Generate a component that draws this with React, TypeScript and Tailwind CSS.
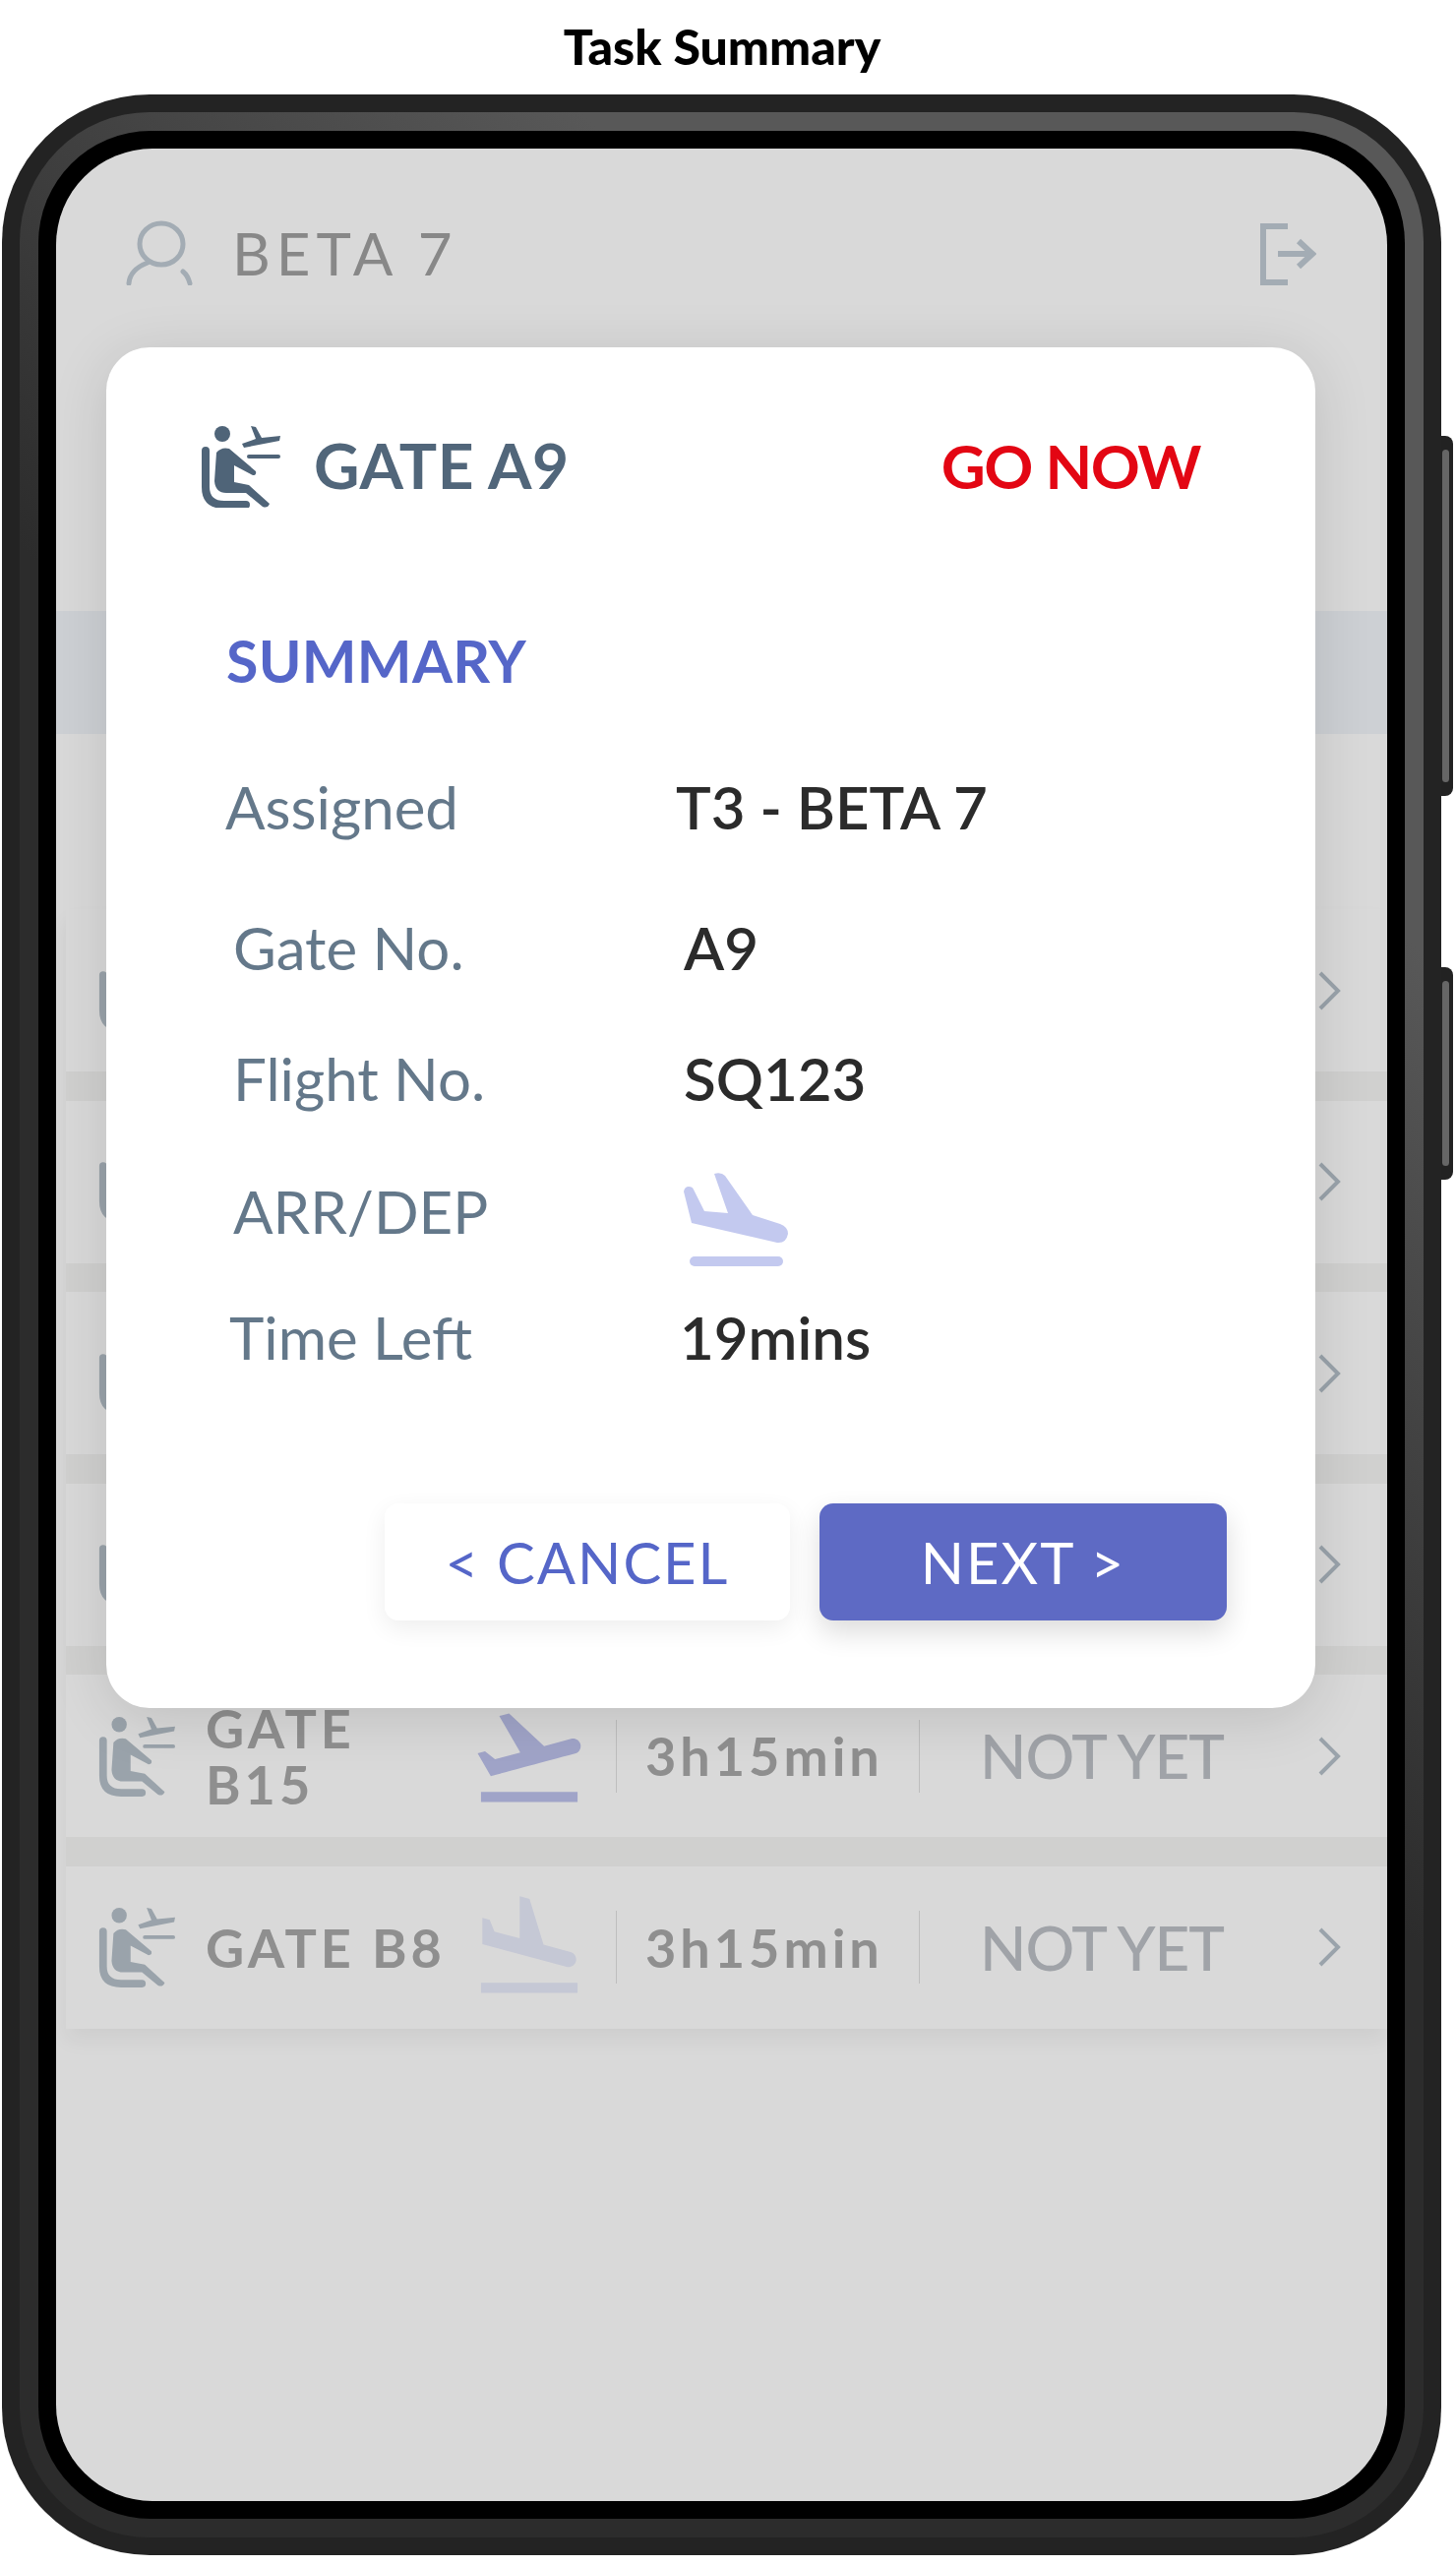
import { MdFlightLand, MdFlightTakeoff } from "react-icons/md";

const SeatIcon = ({ className }: { className: string }) => (
  <svg viewBox="0 0 82 83" className={className} fill="currentColor">
    <circle cx="23" cy="8" r="8" />
    <path d="M6 25V62Q6 80 25 80H47" fill="none" stroke="currentColor" strokeWidth="8" strokeLinecap="round" />
    <path d="M17 27Q22 21 30 23L57 46Q58 50 54 50L35 40V57L50 60L71 79Q69 84 64 82L47 68H27Q16 68 15 56Z" />
    <path d="M52 0L57 1L63 12L82 10L81 15L45 22L43 18L57 13Z" />
    <path d="M50 31H80" fill="none" stroke="currentColor" strokeWidth="4" strokeLinecap="round" />
  </svg>
);

const RoundedLandIcon = ({ className }: { className: string }) => (
  <svg viewBox="0 0 106 95" className={className} fill="currentColor">
    <path d="M31 1Q38-1 42 3L70 43L98 52Q106 55 106 62Q104 72 95 71L8 51L0 19Q1 14 5 14Q9 14 10 17L21 39L45 41Z" />
    <rect x="6" y="85" width="95" height="10" rx="5" />
  </svg>
);

const UserIcon = () => (
  <svg viewBox="0 0 68 66" className="w-[68px] h-[66px] text-[#c0cbd4]" fill="none" stroke="currentColor" strokeWidth="5" strokeLinecap="round">
    <ellipse cx="36" cy="24" rx="22" ry="21" />
    <path d="M3 64Q4 50 22 43" />
    <path d="M58 52Q63 56 65 64" />
  </svg>
);

const LogoutIcon = () => (
  <svg viewBox="0 0 57 63" className="w-[57px] h-[63px] text-[#c0cbd4]" fill="none" stroke="currentColor" strokeWidth="6">
    <path d="M28 3H3V60H28" />
    <path d="M18 31H52M39 18L53 31L39 44" />
  </svg>
);

const ChevronIcon = () => (
  <svg viewBox="0 0 24 40" className="w-[24px] h-[40px] text-[#b5c0c9]" fill="none" stroke="currentColor" strokeWidth="4">
    <path d="M3 2L21 20L3 38" />
  </svg>
);

const gateRows = [
  { id: 1 },
  { id: 2 },
  { id: 3 },
  { id: 4 },
  { id: 5, gate: "GATE B15", kind: "takeoff" },
  { id: 6, gate: "GATE B8", kind: "land" },
];

const summaryRows = [
  { label: "Assigned", value: "T3 - BETA 7", rowClass: "mt-[76px] pl-[121px]" },
  { label: "Gate No.", value: "A9", rowClass: "mt-[71px] pl-[129px]" },
  { label: "Flight No.", value: "SQ123", rowClass: "mt-[61px] pl-[129px]" },
  { label: "ARR/DEP", icon: true, rowClass: "mt-[63px] pl-[129px]" },
  { label: "Time Left", value: "19mins", rowClass: "mt-[56px] pl-[125px]" },
];

const GateRow = ({ gate, kind }: { gate?: string; kind?: string }) => (
  <div className="h-[165px] bg-white flex items-center pl-[32px] pr-[47px]">
    <SeatIcon className="w-[79px] h-[88px] text-[#b5c0c9] shrink-0" />
    <div className="w-[305px] pl-[31px] pr-[26px] shrink-0 text-[54px] leading-[57px] font-bold tracking-[4px] text-[#a8a8a8]">
      {gate}
    </div>
    <div className="w-[110px] h-[100px] shrink-0 flex items-center justify-center">
      {kind === "takeoff" && <MdFlightTakeoff className="text-[124px] shrink-0 text-[#bcc1eb]" />}
      {kind === "land" && <MdFlightLand className="text-[124px] shrink-0 text-[#e8ebfb]" />}
    </div>
    {gate && (
      <>
        <div className="w-px h-[74px] bg-[#e0e0e0] ml-[33px] shrink-0" />
        <div className="w-[307px] pl-[29px] shrink-0 text-[54px] font-bold tracking-[4px] text-[#a8a8a8]">3h15min</div>
        <div className="w-px h-[74px] bg-[#e0e0e0] shrink-0" />
        <div className="pl-[61px] shrink-0 text-[62px] font-medium tracking-[-1px] whitespace-nowrap text-[#bcc0c6]">NOT YET</div>
      </>
    )}
    <div className="ml-auto">
      <ChevronIcon />
    </div>
  </div>
);

const App = () => {
  return (
    <div className="w-[1480px] h-[2608px] bg-white font-[Lato,sans-serif] overflow-hidden">
      <h1 className="h-[96px] pt-[19px] text-center text-[50px] leading-[56px] font-black text-black pr-[12px]">Task Summary</h1>

      <div className="relative ml-[2px] w-[1463px] h-[2501px]">
        {/* side buttons */}
        <div className="absolute left-[1455px] top-[347px] w-[20px] h-[366px] rounded-r-[8px] bg-[#222] flex justify-end py-[14px] pr-[4px]">
          <div className="w-[7px] bg-[#666] rounded-full" />
        </div>
        <div className="absolute left-[1455px] top-[887px] w-[20px] h-[216px] rounded-r-[8px] bg-[#222] flex justify-end py-[14px] pr-[4px]">
          <div className="w-[7px] bg-[#666] rounded-full" />
        </div>

        <div className="relative h-full rounded-[150px] bg-[#232323] p-[18px]">
          <div className="h-full rounded-[132px] bg-[linear-gradient(45deg,#2c2c2c_52%,#585858_78%)] p-[19px]">
            <div className="h-full rounded-[114px] bg-black p-[18px]">
              <div className="relative h-full rounded-[98px] bg-white overflow-hidden">
                <div className="h-[470px]">
                  <div className="flex items-center pt-[72px] pl-[71px] pr-[72px]">
                    <UserIcon />
                    <span className="ml-[40px] text-[60px] leading-[68px] tracking-[6px] text-[#a0a0a0]">BETA 7</span>
                    <div className="ml-auto mt-[2px]">
                      <LogoutIcon />
                    </div>
                  </div>
                </div>
                <div className="h-[125px] bg-slate-100" />
                <div className="h-[178px]" />
                <div className="ml-[10px] bg-[#f5f5f4] flex flex-col gap-[29.5px] shadow-[0_12px_20px_rgba(0,0,0,0.05)]">
                  {gateRows.map((row) => (
                    <GateRow key={row.id} gate={row.gate} kind={row.kind} />
                  ))}
                </div>

                {/* dim layer + dialog */}
                <div className="absolute inset-0 bg-black/15">
                  <div className="absolute left-[51px] top-[202px] w-[1229px] h-[1383px] rounded-[44px] bg-white pt-[75px] shadow-[0_10px_60px_rgba(0,0,0,0.12)]">
                    <div className="flex items-center pl-[95px] pr-[117px]">
                      <SeatIcon className="w-[82px] h-[83px] text-[#4f6478]" />
                      <span className="ml-[34px] -mt-[3px] text-[64px] tracking-[0.5px] font-bold text-[#51667a]">GATE A9</span>
                      <span className="ml-auto -mt-[3px] text-[62px] font-bold tracking-[-1.5px] text-[#e30613]">GO NOW</span>
                    </div>

                    <div className="mt-[115px] pl-[122px] h-[72px] text-[59px] leading-[72px] font-bold tracking-[0.3px] text-[#5566c8]">SUMMARY</div>

                    {summaryRows.map((row) => (
                      <div key={row.label} className={`flex items-center h-[72px] ${row.rowClass}`}>
                        <div className="w-[458px] shrink-0 text-[60px] text-[#64788a]">{row.label}</div>
                        {row.icon ? (
                          <RoundedLandIcon className="w-[106px] h-[95px] mt-[16px] text-[#c3c9ef] shrink-0" />
                        ) : (
                          <div className="text-[60px] font-semibold text-[#2b2b2b]">{row.value}</div>
                        )}
                      </div>
                    ))}

                    <div className="mt-[133px] pr-[90px] flex justify-end gap-[30px]">
                      <button className="w-[412px] h-[119px] rounded-[14px] bg-white text-[58px] tracking-[2px] text-[#5566c8] shadow-[0_8px_24px_rgba(0,0,0,0.07)]">&lt; CANCEL</button>
                      <button className="w-[414px] h-[119px] rounded-[14px] bg-[#5e6ac4] text-[58px] tracking-[2px] text-white shadow-[0_12px_28px_rgba(0,0,0,0.14)]">NEXT &gt;</button>
                    </div>
                  </div>
                </div>
              </div>
            </div>
          </div>
        </div>
      </div>
    </div>
  );
};

export default App;
